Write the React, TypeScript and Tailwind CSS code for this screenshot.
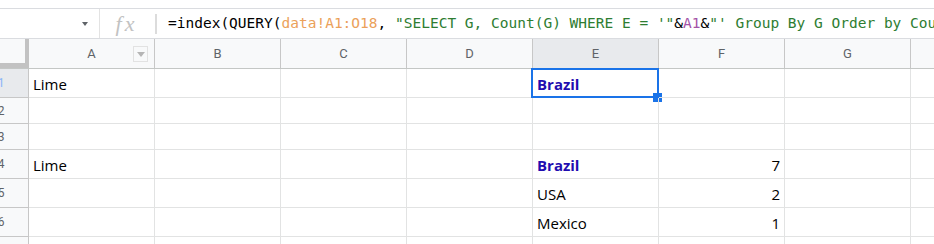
import React from "react";

type Cell = { text?: string; bold?: boolean; right?: boolean };

const columns = ["A", "B", "C", "D", "E", "F", "G", "H"];

// heights include the bottom grid line
const rows: { n: number; h: string; cells: Record<string, Cell> }[] = [
  { n: 1, h: "h-[29px]", cells: { A: { text: "Lime" }, E: { text: "Brazil", bold: true } } },
  { n: 2, h: "h-[26px]", cells: {} },
  { n: 3, h: "h-[26px]", cells: {} },
  { n: 4, h: "h-[29px]", cells: { A: { text: "Lime" }, E: { text: "Brazil", bold: true }, F: { text: "7", right: true } } },
  { n: 5, h: "h-[29px]", cells: { E: { text: "USA" }, F: { text: "2", right: true } } },
  { n: 6, h: "h-[29px]", cells: { E: { text: "Mexico" }, F: { text: "1", right: true } } },
  { n: 7, h: "h-[29px]", cells: {} },
];

const FormulaBar = () => (
  <div className="flex h-[31px] border-y border-[#dadce0] bg-white">
    {/* name box */}
    <div className="flex w-[100px] shrink-0 items-center justify-end border-r border-[#e3e3e3] pr-[11px]">
      <svg width="6" height="4" viewBox="0 0 6 4">
        <path d="M0 0h6L3 4z" fill="#5f6368" />
      </svg>
    </div>
    <div className="flex w-[55px] shrink-0 items-center justify-center">
      <span className="pr-[2px] text-[22px] italic leading-none tracking-[3px] text-[#c2c2c2] [font-family:'Liberation_Serif',serif]">
        fx
      </span>
    </div>
    <div className="my-auto h-[20px] w-[2px] shrink-0 bg-[#dcdcdc]" />
    <div className="flex min-w-0 flex-1 items-center overflow-hidden whitespace-nowrap pl-[11px] text-[14.5px] text-black [font-family:'DejaVu_Sans_Mono',monospace]">
      <span>=index(QUERY(</span>
      <span className="text-[#eba15a]">data!A1:O18</span>
      <span>,&nbsp;</span>
      <span className="text-[#2e7d32]">"SELECT G, Count(G) WHERE E = '"</span>
      <span>&amp;</span>
      <span className="text-[#a453a8]">A1</span>
      <span>&amp;</span>
      <span className="text-[#2e7d32]">"' Group By G Order by Count(G) desc")</span>
    </div>
  </div>
);

const HeaderRow = () => (
  <div className="flex h-[30px] border-b border-[#c4c7c5] bg-[#f8f9fa] text-[13px] text-[#5f6368] [font-family:Roboto,sans-serif]">
    <div className="w-[29px] shrink-0">
      <div className="h-[29px] w-[29px] border-r-[4px] border-b-[5px] border-[#c2c2c2] bg-[#f8f9fa]" />
    </div>
    {columns.map((c) => (
      <div
        key={c}
        className={`relative flex w-[126px] shrink-0 items-center justify-center border-r border-[#c7c7c7] ${
          c === "E" ? "bg-[#e8eaed]" : ""
        }`}
      >
        {c}
        {c === "A" && (
          <div className="absolute right-[6px] top-[7px] flex h-[16px] w-[15px] items-center justify-center border border-[#e2e2e2]">
            <svg width="8" height="5" viewBox="0 0 8 5">
              <path d="M0 0h8L4 5z" fill="#b5b5b5" />
            </svg>
          </div>
        )}
      </div>
    ))}
  </div>
);

const Grid = () => (
  <div className="text-[15px] [font-family:'Open_Sans',sans-serif]">
    {rows.map((r) => (
      <div key={r.n} className={`flex ${r.h}`}>
        <div
          className={`flex w-[29px] shrink-0 items-center overflow-hidden border-r border-b border-[#c7c7c7] text-[12px] [font-family:Roboto,sans-serif] ${
            r.n === 1 ? "bg-[#e8eaed] text-[#8ab4f8]" : "bg-[#f8f9fa] text-[#5f6368]"
          }`}
        >
          <div className="ml-[-22px] w-[46px] shrink-0 text-center">{r.n}</div>
        </div>
        {columns.map((c) => {
          const cell = r.cells[c];
          return (
            <div
              key={c}
              className={`relative flex w-[126px] shrink-0 items-end border-r border-b border-[#e2e3e3] px-[4px] pb-[3px] leading-[20px] ${
                cell?.right ? "justify-end" : ""
              } ${cell?.bold ? "font-bold text-[#1f0db0]" : "text-black"}`}
            >
              {cell?.text}
              {r.n === 1 && c === "E" && (
                <>
                  <div className="absolute -left-[2px] -top-[1px] -right-[1px] -bottom-[1px] border-2 border-[#1a73e8]" />
                  <div className="absolute -right-[4px] -bottom-[5px] h-[9px] w-[9px] bg-[#1a73e8]" />
                </>
              )}
            </div>
          );
        })}
      </div>
    ))}
  </div>
);

export default function App() {
  return (
    <div className="h-[244px] w-[934px] overflow-hidden bg-white">
      <div className="h-[8px]" />
      <FormulaBar />
      <HeaderRow />
      <Grid />
    </div>
  );
}
